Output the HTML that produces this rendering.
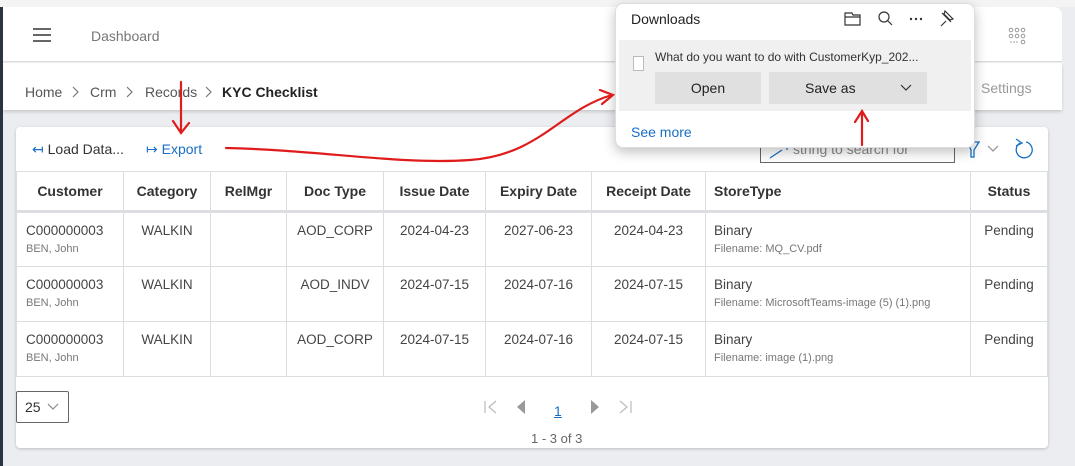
<!DOCTYPE html>
<html><head><style>
*{box-sizing:border-box;margin:0;padding:0}
body{width:1075px;height:466px;overflow:hidden;background:#ebedf0;font-family:"Liberation Sans",sans-serif;position:relative;color:#333}
.a{position:absolute}
table{border-collapse:collapse;position:absolute;left:16px;top:171px;width:1032px;font-size:13.5px}
td,th{border:1px solid #dcdde1;vertical-align:top}
th{height:40px;font-weight:bold;color:#333;vertical-align:middle;font-size:14px;border-bottom:3px solid #dcdde1}
td{height:55px;padding-top:10px;color:#444}
.s{font-size:11px;color:#777;margin-top:5px}
.c{text-align:center}
svg{overflow:visible}
.bc{position:absolute;top:84px;font-size:14px;color:#555;white-space:nowrap}
</style></head><body>
<div class="a" style="left:0;top:0;width:1075px;height:7px;background:#f4f4f4"></div>
<div class="a" style="left:0;top:7px;width:3px;height:459px;background:#2b3346"></div>
<div class="a" style="left:3px;top:7px;width:1059px;height:55px;background:#fff;border-bottom:1px solid #ddd;border-top-right-radius:8px"></div>
<div class="a" style="left:33px;top:28px;width:18px;height:2px;background:#666;box-shadow:0 6px 0 #666,0 12px 0 #666"></div>
<div class="a" style="left:91px;top:28px;font-size:14px;color:#777">Dashboard</div>
<svg class="a" style="left:1008px;top:28px" width="20" height="20"><g fill="none" stroke="#999" stroke-width="1"><circle cx="3" cy="2" r="1.8"/><circle cx="9" cy="2" r="1.8"/><circle cx="15" cy="2" r="1.8"/><circle cx="3" cy="8" r="1.8"/><circle cx="9" cy="8" r="1.8"/><circle cx="15" cy="8" r="1.8"/><circle cx="15" cy="14" r="1.8"/></g><g fill="#999"><circle cx="3" cy="14" r=".8"/><circle cx="6" cy="14" r=".8"/><circle cx="9" cy="14" r=".8"/></g></svg>
<div class="a" style="left:3px;top:63px;width:1059px;height:47px;background:#fff;box-shadow:0 2px 3px rgba(0,0,0,.15)"></div>
<div class="bc" style="left:25px">Home</div>
<div class="bc" style="left:90px">Crm</div>
<div class="bc" style="left:145px">Records</div>
<div class="bc" style="left:222px;color:#222;font-weight:bold">KYC Checklist</div>
<svg class="a" style="left:0;top:0" width="10" height="10"><g fill="none" stroke="#777" stroke-width="1.2"><path d="M73 87 L78 92 L73 97"/><path d="M127 87 L132 92 L127 97"/><path d="M206 87 L211 92 L206 97"/></g></svg>
<div class="a" style="left:981px;top:80px;font-size:14px;color:#999">Settings</div>
<div class="a" style="left:16px;top:127px;width:1032px;height:321px;background:#fff;border-radius:4px;box-shadow:0 1px 3px rgba(0,0,0,.2)"></div>
<div class="a" style="left:32px;top:141px;font-size:14px;color:#333"><span style="color:#1a6fc4">&#8612;</span> Load Data...</div>
<div class="a" style="left:146px;top:141px;font-size:14px;color:#1a6fc4">&#8614; Export</div>
<div class="a" style="left:760px;top:135px;width:195px;height:28px;border:1px solid #666;font-size:14px;color:#888;padding:5px 0 0 32px">string to search for</div>
<svg class="a" style="left:0;top:0" width="10" height="10"><g fill="none" stroke="#1a6fc4" stroke-width="1.3"><path d="M967 142 L979 142 L974 150 L974 157 L971 157 L971 150 Z"/><path d="M988 146 L993 151 L998 146" stroke="#999"/><path d="M1020 143 A8 8 0 1 0 1026 142"/></g><path d="M1016 139 L1022 143 L1016 146" stroke="#1a6fc4" fill="none" stroke-width="1.3"/><path d="M770 158 L782 150 M777 146 L787 146 L787 150" stroke="#1a6fc4" fill="none" stroke-width="1.2"/></svg>
<table>
<tr><th style="width:107px">Customer</th><th style="width:87px">Category</th><th style="width:76px">RelMgr</th><th style="width:97px">Doc Type</th><th style="width:102px">Issue Date</th><th style="width:106px">Expiry Date</th><th style="width:114px">Receipt Date</th><th style="text-align:left;padding-left:8px;width:265px">StoreType</th><th>Status</th></tr>
<tr><td style="padding-left:9px">C000000003<div class="s">BEN, John</div></td><td class="c">WALKIN</td><td></td><td class="c">AOD_CORP</td><td class="c">2024-04-23</td><td class="c">2027-06-23</td><td class="c">2024-04-23</td><td style="padding-left:8px">Binary<div class="s">Filename: MQ_CV.pdf</div></td><td class="c">Pending</td></tr>
<tr><td style="padding-left:9px">C000000003<div class="s">BEN, John</div></td><td class="c">WALKIN</td><td></td><td class="c">AOD_INDV</td><td class="c">2024-07-15</td><td class="c">2024-07-16</td><td class="c">2024-07-15</td><td style="padding-left:8px">Binary<div class="s">Filename: MicrosoftTeams-image (5) (1).png</div></td><td class="c">Pending</td></tr>
<tr><td style="padding-left:9px">C000000003<div class="s">BEN, John</div></td><td class="c">WALKIN</td><td></td><td class="c">AOD_CORP</td><td class="c">2024-07-15</td><td class="c">2024-07-16</td><td class="c">2024-07-15</td><td style="padding-left:8px">Binary<div class="s">Filename: image (1).png</div></td><td class="c">Pending</td></tr>
</table>
<div class="a" style="left:16px;top:391px;width:53px;height:32px;border:1px solid #666;border-radius:2px;font-size:14px;padding:7px 0 0 8px">25</div>
<svg class="a" style="left:0;top:0" width="10" height="10"><path d="M48 404 L53 409 L58 404" fill="none" stroke="#888" stroke-width="1.2"/>
<g fill="none" stroke="#bbb" stroke-width="1.2"><path d="M485 401 L485 413 M496 401 L489 407 L496 413"/><path d="M620 401 L627 407 L620 413 M631 401 L631 413"/></g>
<path d="M525 400 L517 407 L525 414 Z" fill="#999"/><path d="M591 400 L599 407 L591 414 Z" fill="#999"/></svg>
<div class="a" style="left:554px;top:403px;font-size:14px;color:#1a6fc4;text-decoration:underline">1</div>
<div class="a" style="left:531px;top:431px;font-size:13px;color:#666">1 - 3 of 3</div>
<div class="a" style="left:615px;top:3px;width:360px;height:145px;background:#fff;border-radius:8px;box-shadow:0 4px 12px rgba(0,0,0,.25);border:1px solid #ddd"></div>
<div class="a" style="left:631px;top:11px;font-size:14px;color:#222">Downloads</div>
<svg class="a" style="left:0;top:0" width="10" height="10"><g fill="none" stroke="#333" stroke-width="1.2"><path d="M845 13 L852 13 L853 15 L860 15 L860 25 L845 25 Z M845 17 L860 17"/><circle cx="884" cy="17" r="5"/><path d="M888 21 L892 25"/><path d="M942 13 L951 22 M945 11 L953 19 L950 20 L944 14 Z M946 21 L941 26"/></g><g fill="#333"><circle cx="911" cy="19" r="1.2"/><circle cx="916" cy="19" r="1.2"/><circle cx="921" cy="19" r="1.2"/></g></svg>
<div class="a" style="left:619px;top:40px;width:352px;height:71px;background:#f0f0f0"></div>
<div class="a" style="left:633px;top:56px;width:11px;height:15px;border:1px solid #bbb;background:#fff"></div>
<div class="a" style="left:655px;top:50px;font-size:12px;color:#333">What do you want to do with CustomerKyp_202...</div>
<div class="a" style="left:655px;top:72px;width:106px;height:32px;background:#e0e0e0;font-size:14px;text-align:center;padding-top:8px;color:#222">Open</div>
<div class="a" style="left:769px;top:72px;width:158px;height:32px;background:#e0e0e0;font-size:14px;padding:8px 0 0 36px;color:#222">Save as</div>
<svg class="a" style="left:0;top:0" width="10" height="10"><path d="M901 85 L906 90 L911 85" fill="none" stroke="#333" stroke-width="1.2"/></svg>
<div class="a" style="left:631px;top:124px;font-size:14px;color:#1a6fc4">See more</div>
<svg class="a" style="left:0;top:0" width="1075" height="466"><g fill="none" stroke="#e01b1b" stroke-width="2.2" stroke-linecap="round">
<path d="M181 82 L181 132 M173 121 L181 133 L189 123"/>
<path d="M226 148 C320 150 400 165 470 160 C540 155 560 110 612 95 M600 90 L613 95 L602 104"/>
<path d="M862 145 L862 112 M855 122 L862 111 L868 121"/>
</g></svg>
</body></html>
